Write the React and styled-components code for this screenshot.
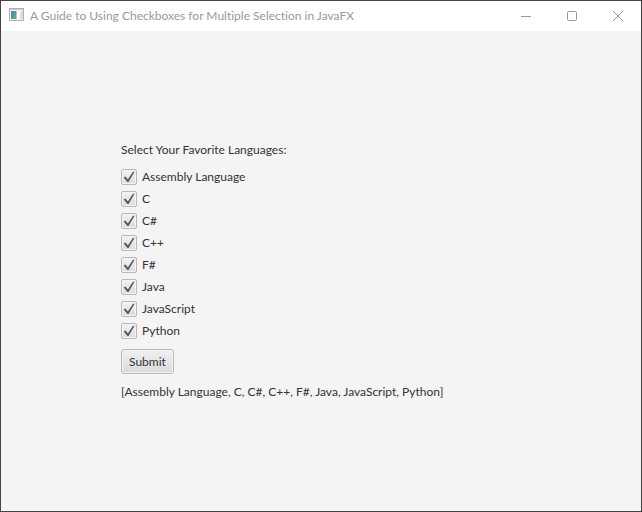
import React, { useState } from "react";
import styled, { createGlobalStyle } from "styled-components";

const GlobalStyle = createGlobalStyle`
  *, *::before, *::after { box-sizing: border-box; }
  body { margin: 0; background: #f4f4f4; }
`;

const Window = styled.div`
  display: flex;
  flex-direction: column;
  min-height: 100vh;
  border: 1px solid #444446;
  background: #f4f4f4;
  color: #333333;
  font: 12px/16px Lato, "Segoe UI", sans-serif;
  font-variant-ligatures: none;
`;

const TitleBar = styled.header`
  display: flex;
  align-items: center;
  height: 30px;
  padding-left: 8px;
  background: #ffffff;
  color: #999999;
`;

const AppIcon = styled.svg`
  flex: none;
  width: 16px;
  height: 16px;
  margin-right: 5px;
`;

const Title = styled.h1`
  flex: 1;
  min-width: 0;
  margin: 0;
  overflow: hidden;
  font-size: 12px;
  font-weight: 400;
  line-height: 16px;
  text-overflow: ellipsis;
  white-space: nowrap;
`;

const WindowButton = styled.button`
  display: flex;
  flex: none;
  align-items: center;
  justify-content: center;
  width: 46px;
  height: 30px;
  padding: 0;
  border: 0;
  background: transparent;
  color: #999999;
`;

const Form = styled.form`
  display: flex;
  flex: 1;
  flex-direction: column;
  align-items: flex-start;
  justify-content: center;
  gap: 10px;
  padding: 0 20px 0 120px;
`;

const Choices = styled.fieldset`
  display: flex;
  flex-direction: column;
  gap: 6px;
  min-width: 0;
  margin: 0;
  padding: 0;
  border: 0;
`;

const Prompt = styled.legend`
  margin-bottom: 11px;
  padding: 0;
  line-height: 16px;
`;

const Choice = styled.label`
  display: flex;
  align-items: center;
  gap: 5px;
  height: 16px;
`;

const Box = styled.span`
  display: grid;
  flex: none;
  width: 16px;
  height: 16px;

  & > * { grid-area: 1 / 1; }
`;

const Tick = styled.input`
  appearance: none;
  width: 16px;
  height: 16px;
  margin: 0;
  border: 1px solid #b9b9b9;
  border-radius: 2px;
  background: linear-gradient(#f2f2f2, #dcdcdc);
  box-shadow: inset 0 0 0 1px #f4f4f4;

  &:focus-visible { outline: 1px solid #039ed3; }
  &:not(:checked) + svg { visibility: hidden; }
`;

const TickMark = styled.svg`
  width: 16px;
  height: 16px;
  pointer-events: none;
`;

const Submit = styled.button`
  height: 25px;
  padding: 0 7px;
  border: 1px solid #b9b9b9;
  border-radius: 3px;
  background: linear-gradient(#f0f0f0, #dadada);
  box-shadow: inset 0 0 0 1px #f2f2f2;
  color: #333333;
  font: inherit;
`;

const Result = styled.output`
  line-height: 16px;
`;

const languages = [
  "Assembly Language", "C", "C#", "C++", "F#", "Java", "JavaScript", "Python",
];

function LanguageChoice({ name, checked, onToggle }) {
  return (
    <Choice>
      <Box>
        <Tick type="checkbox" checked={checked} onChange={onToggle} />
        <TickMark viewBox="0 0 16 16" aria-hidden="true">
          <path d="M2.7 8.4 L4.4 7.4 L6.9 10.6 L12 2.7 L13.6 2.7 L7.5 13 L6.5 13 Z" fill="#555555" />
        </TickMark>
      </Box>
      {name}
    </Choice>
  );
}

export default function App() {
  const [selected, setSelected] = useState(languages);
  const [submitted, setSubmitted] = useState(languages);

  const toggle = (name) =>
    setSelected((current) =>
      languages.filter((item) => (item === name) !== current.includes(item))
    );

  const submit = (event) => {
    event.preventDefault();
    setSubmitted(selected);
  };

  return (
    <>
      <GlobalStyle />
      <Window>
        <TitleBar>
          <AppIcon viewBox="0 0 16 16" aria-hidden="true">
            <defs>
              <linearGradient id="pane" x1="0" y1="0" x2="1" y2="1">
                <stop offset="0" stopColor="#4f86b0" />
                <stop offset="1" stopColor="#56b184" />
              </linearGradient>
            </defs>
            <rect x="0.5" y="0.5" width="14" height="12" fill="#f3f3f3" stroke="#adb1b5" />
            <path d="M1 1.5h13" stroke="#c9cccf" />
            <rect x="2" y="3" width="5" height="8" fill="url(#pane)" />
            <rect x="7" y="3" width="1" height="8" fill="#b5c4cc" />
            <rect x="8" y="3" width="3" height="8" fill="#ffffff" />
            <path d="M12 3h2v8h-3v-4z" fill="#d4e2d8" />
          </AppIcon>
          <Title>A Guide to Using Checkboxes for Multiple Selection in JavaFX</Title>
          <WindowButton type="button" aria-label="Minimize">
            <svg width="10" height="10" fill="none" stroke="currentColor"><path d="M0 5.5h10" /></svg>
          </WindowButton>
          <WindowButton type="button" aria-label="Maximize">
            <svg width="10" height="10" fill="none" stroke="currentColor"><rect x="0.5" y="0.5" width="9" height="9" rx="1" /></svg>
          </WindowButton>
          <WindowButton type="button" aria-label="Close">
            <svg width="10" height="10" fill="none" stroke="currentColor"><path d="M0 0l10 10M10 0L0 10" /></svg>
          </WindowButton>
        </TitleBar>
        <Form onSubmit={submit}>
          <Choices>
            <Prompt>Select Your Favorite Languages:</Prompt>
            {languages.map((name) => (
              <LanguageChoice
                key={name}
                name={name}
                checked={selected.includes(name)}
                onToggle={() => toggle(name)}
              />
            ))}
          </Choices>
          <Submit type="submit">Submit</Submit>
          <Result>[{submitted.join(", ")}]</Result>
        </Form>
      </Window>
    </>
  );
}
